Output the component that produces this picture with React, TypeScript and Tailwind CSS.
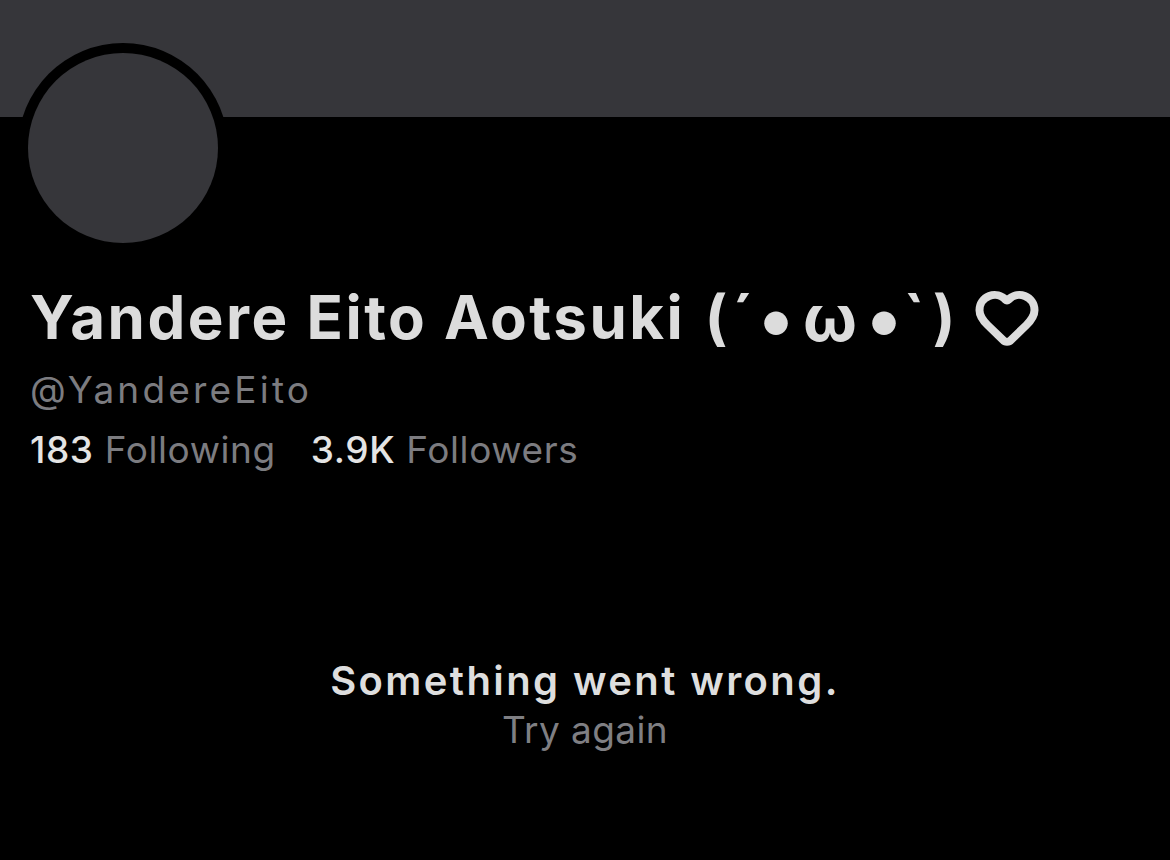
import React from 'react';
import { Heart } from 'lucide-react';

// kaomoji glyphs, each in a box so spacing matches the wide iOS rendering
const face: { c: string; w: string }[] = [
  { c: '(', w: 'w-[24px]' },
  { c: '´', w: 'w-[30px]' },
  { c: '•', w: 'w-[36px] scale-[1.25]' },
  { c: 'ω', w: 'w-[72px] scale-[1.08]' },
  { c: '•', w: 'w-[36px] scale-[1.25]' },
  { c: '`', w: 'w-[24px]' },
  { c: ')', w: 'w-[36px]' },
];

const App: React.FC = () => {
  return (
    <div className="w-[1170px] h-[860px] bg-black overflow-hidden font-['Inter','Liberation_Sans',sans-serif]">
      <div className="h-[117px] bg-[#36363a]"></div>

      <div className="px-[30px]">
        <div className="-mt-[74px] ml-[-12px] w-[210px] h-[210px] rounded-full bg-black p-[10px]">
          <div className="w-full h-full rounded-full bg-[#36363a]"></div>
        </div>

        <div className="mt-[28px] flex items-center h-[72px] text-[60px] leading-[72px] font-bold text-[#dcdcdc]">
          <span className="w-[674px] shrink-0 whitespace-nowrap tracking-[2.5px]">Yandere Eito Aotsuki</span>
          <span className="flex items-center">
            {face.map((f, i) => (
              <span key={i} className={`${f.w} inline-block text-center`}>{f.c}</span>
            ))}
          </span>
          <Heart className="ml-[12px] w-[66px] h-[66px] shrink-0 text-[#dcdcdc]" strokeWidth={2.9} />
        </div>

        <div className="mt-[15px] text-[37px] leading-[44px] text-[#7c7c80] tracking-[3.2px]">@YandereEito</div>

        <div className="mt-[16px] text-[37px] leading-[44px] text-[#7c7c80] tracking-[0.6px] whitespace-nowrap">
          <span className="text-[#e4e4e4] font-medium">183</span> Following
          <span className="ml-[35px] text-[#e4e4e4] font-medium">3.9K</span> Followers
        </div>
      </div>

      <div className="mt-[185px] flex flex-col items-center">
        <div className="text-[40px] leading-[48px] font-semibold text-[#dedede] tracking-[2.4px]">Something went wrong.</div>
        <div className="mt-[3px] text-[37px] leading-[44px] text-[#7f7f83] tracking-[0.4px]">Try again</div>
      </div>
    </div>
  );
};

export default App;
